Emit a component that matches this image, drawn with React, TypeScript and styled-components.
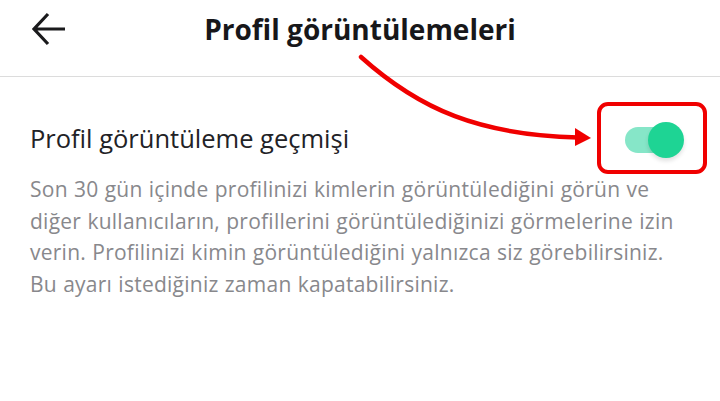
import React from "react"
import styled, { createGlobalStyle } from "styled-components"

const GlobalStyle = createGlobalStyle`
  body {
    margin: 0;
    background: #ffffff;
    font-family: "Open Sans", "Noto Sans", sans-serif;
  }
`

const Page = styled.div`
  position: relative;
  width: 720px;
  height: 401px;
  overflow: hidden;
  background: #ffffff;
`

const Header = styled.header`
  display: grid;
  grid-template-columns: 1fr auto 1fr;
  align-items: center;
  height: 77px;
  padding-bottom: 18px;
  box-sizing: border-box;
  border-bottom: 1px solid #dcdcdc;
`

const BackButton = styled.button`
  justify-self: start;
  margin-left: 31px;
  padding: 0;
  border: none;
  background: none;
  display: flex;
  color: #1a1a1c;
`

const Title = styled.h1`
  margin: 0;
  font-size: 28px;
  font-weight: 700;
  color: #17171a;
`

const Content = styled.section`
  padding: 25px 13px 0 30px;
`

const SettingRow = styled.div`
  display: flex;
  align-items: center;
  justify-content: space-between;
`

const Label = styled.span`
  font-size: 25.5px;
  color: #222226;
`

const Highlight = styled.div`
  width: 110px;
  height: 72px;
  box-sizing: border-box;
  border: 4px solid #f00000;
  border-radius: 11px;
  display: flex;
  align-items: center;
  padding: 4px 0 0 24px;
`

const Switch = styled.div<{ $on: boolean }>`
  position: relative;
  width: 46px;
  height: 26px;
  border-radius: 13px;
  background: ${p => (p.$on ? "#86e6c8" : "#dddddd")};
`

const Knob = styled.div<{ $on: boolean }>`
  position: absolute;
  top: -5px;
  left: ${p => (p.$on ? "23px" : "-12px")};
  width: 36px;
  height: 36px;
  border-radius: 50%;
  background: #1ed494;
  box-shadow: 0 3px 4px rgba(0, 0, 0, 0.12);
`

const Description = styled.p`
  margin: 0;
  font-size: 21px;
  line-height: 31.5px;
  letter-spacing: 0.25px;
  word-spacing: 0.5px;
  color: #88888c;
  white-space: nowrap;
`

const Annotation = styled.svg`
  position: absolute;
  left: 0;
  top: 0;
  pointer-events: none;
`

const App: React.FC = () => {
  return (
    <Page>
      <GlobalStyle />
      <Header>
        <BackButton aria-label="Geri">
          <svg width="36" height="34" viewBox="0 0 36 34">
            <path
              d="M34 17H3M17 2L3 17l14 15"
              fill="none"
              stroke="currentColor"
              strokeWidth="3.2"
            />
          </svg>
        </BackButton>
        <Title>Profil görüntülemeleri</Title>
        <span />
      </Header>
      <Content>
        <SettingRow>
          <Label>Profil görüntüleme geçmişi</Label>
          <Highlight>
            <Switch $on>
              <Knob $on />
            </Switch>
          </Highlight>
        </SettingRow>
        <Description>
          Son 30 gün içinde profilinizi kimlerin görüntülediğini görün ve
          <br />
          diğer kullanıcıların, profillerini görüntülediğinizi görmelerine izin
          <br />
          verin. Profilinizi kimin görüntülediğini yalnızca siz görebilirsiniz.
          <br />
          Bu ayarı istediğiniz zaman kapatabilirsiniz.
        </Description>
      </Content>
      <Annotation width="720" height="401">
        <path
          d="M361 57 C 420 110, 480 135, 578 137.5"
          fill="none"
          stroke="#f00000"
          strokeWidth="4.5"
          strokeLinecap="round"
        />
        <path d="M575 128 L591 138 L575 146 Z" fill="#f00000" />
      </Annotation>
    </Page>
  )
}

export default App
